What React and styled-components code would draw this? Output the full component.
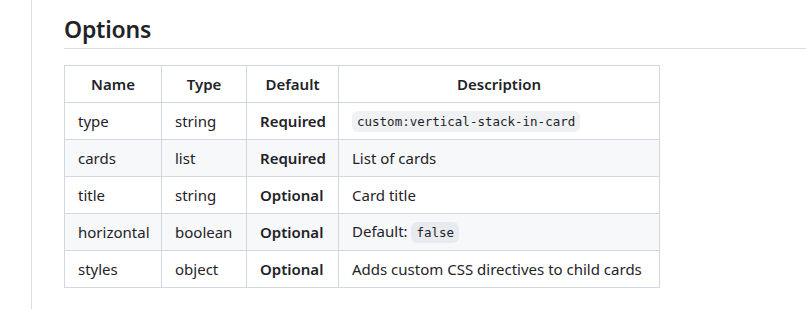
import React from "react"
import styled, { createGlobalStyle } from "styled-components"

const Global = createGlobalStyle`
  html, body {
    margin: 0;
    padding: 0;
    background: #ffffff;
  }
  body {
    font-family: "Noto Sans", "Open Sans", sans-serif;
    color: #1f2328;
  }
`

const Page = styled.div`
  margin-left: 31px;
  min-height: 309px;
  border-left: 1px solid #d8dee4;
  padding-left: 32px;
  box-sizing: border-box;
  overflow: hidden;
`

const Heading = styled.h2`
  margin: 15px 0 16px;
  padding-bottom: 4px;
  font-size: 23px;
  line-height: 1.25;
  font-weight: 600;
  letter-spacing: -0.2px;
  border-bottom: 1px solid #d8dee4;
`

const Table = styled.table`
  width: 596px;
  border-collapse: collapse;
  border-spacing: 0;
  table-layout: fixed;
  font-size: 15px;
  line-height: 24px;
`

const Row = styled.tr`
  background: ${(p) => (p.$striped ? "#f6f8fa" : "#ffffff")};
  border-top: 1px solid #d0d7de;
`

const Head = styled.th`
  padding: 0 13px;
  border: 1px solid #d0d7de;
  font-weight: 600;
  text-align: center;
  height: 37px;
  box-sizing: border-box;
`

const Cell = styled.td`
  padding: 0 13px;
  border: 1px solid #d0d7de;
  font-weight: ${(p) => (p.$bold ? 600 : 400)};
  height: 37px;
  box-sizing: border-box;
  white-space: nowrap;
`

const Code = styled.code`
  font-family: "DejaVu Sans Mono", "Liberation Mono", monospace;
  font-size: 12.5px;
  padding: 3px 5px;
  border-radius: 6px;
  background: rgba(175, 184, 193, 0.2);
`

const options = [
  { name: "type", type: "string", def: "Required", desc: <Code>custom:vertical-stack-in-card</Code> },
  { name: "cards", type: "list", def: "Required", desc: "List of cards" },
  { name: "title", type: "string", def: "Optional", desc: "Card title" },
  { name: "horizontal", type: "boolean", def: "Optional", desc: <>Default: <Code>false</Code></> },
  { name: "styles", type: "object", def: "Optional", desc: "Adds custom CSS directives to child cards" },
]

export default function App() {
  return (
    <Page>
      <Global />
      <Heading>Options</Heading>
      <Table>
        <colgroup>
          <col style={{ width: 97 }} />
          <col style={{ width: 85 }} />
          <col style={{ width: 92 }} />
          <col style={{ width: 321 }} />
        </colgroup>
        <thead>
          <Row>
            <Head>Name</Head>
            <Head>Type</Head>
            <Head>Default</Head>
            <Head>Description</Head>
          </Row>
        </thead>
        <tbody>
          {options.map((o, i) => (
            <Row key={o.name} $striped={i % 2 === 1}>
              <Cell>{o.name}</Cell>
              <Cell>{o.type}</Cell>
              <Cell $bold>{o.def}</Cell>
              <Cell>{o.desc}</Cell>
            </Row>
          ))}
        </tbody>
      </Table>
    </Page>
  )
}
